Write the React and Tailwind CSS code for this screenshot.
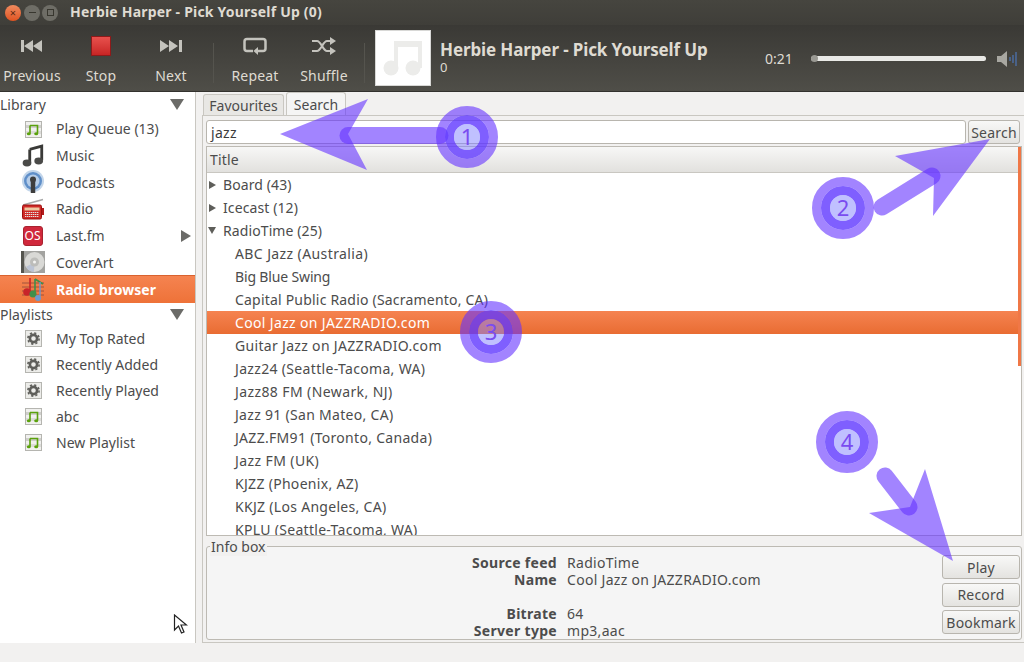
import React from 'react';

const FONT = 'font-["Noto_Sans","Open_Sans",sans-serif]';

const PlaylistIcon = () => (
  <svg width="20" height="20" viewBox="0 0 20 20">
    <rect x="2.5" y="2.5" width="16" height="16" fill="#f0f0ee" stroke="#b5b5b0" />
    <rect x="3" y="6" width="15" height="3" fill="#cfcfcb" />
    <rect x="3" y="12" width="15" height="3" fill="#dcdcd8" />
    <path d="M7 6.500h7.500v8M7 6.500v8" fill="none" stroke="#5aa10c" strokeWidth="1.600" />
    <ellipse cx="5.800" cy="14.800" rx="2" ry="1.500" fill="#5aa10c" />
    <ellipse cx="13.200" cy="14.800" rx="2" ry="1.500" fill="#5aa10c" />
  </svg>
);

const GearIcon = () => (
  <svg width="20" height="20" viewBox="0 0 20 20">
    <rect x="2.5" y="2.5" width="16" height="16" fill="#ecece9" stroke="#b5b5b0" />
    <circle cx="10.500" cy="10.500" r="3.600" fill="none" stroke="#5e5e5a" strokeWidth="2.600" />
    <circle cx="10.500" cy="10.500" r="5.600" fill="none" stroke="#5e5e5a" strokeWidth="1.600" strokeDasharray="2.200 2.200" />
  </svg>
);

const MusicIcon = () => (
  <svg width="24" height="24" viewBox="0 0 22 22">
    <path d="M8 5l11-3v13M8 5v12" fill="none" stroke="#3a3a38" strokeWidth="2.600" />
    <ellipse cx="5.500" cy="17.500" rx="4" ry="3.200" fill="#4a4a48" />
    <ellipse cx="16.200" cy="15.500" rx="4" ry="3.200" fill="#4a4a48" />
  </svg>
);

const PodcastIcon = () => (
  <svg width="24" height="24" viewBox="0 0 24 24">
    <circle cx="12" cy="11" r="11" fill="#c2d5ea" />
    <circle cx="12" cy="11" r="9" fill="#5f8fc9" />
    <circle cx="12" cy="11" r="6.500" fill="#b6cde8" />
    <circle cx="12" cy="9.500" r="3" fill="#3d3d3d" />
    <path d="M12 11v12" stroke="#3d3d3d" strokeWidth="4.500" />
  </svg>
);

const RadioIcon = () => (
  <svg width="24" height="22" viewBox="0 0 24 22">
    <path d="M2 7L22 1.500" stroke="#a8a8a8" strokeWidth="1.600" />
    <rect x="1.500" y="7" width="19" height="14" rx="1.500" fill="#cf2a27" stroke="#9c0f0f" />
    <rect x="21" y="10" width="2" height="7" fill="#b41c1c" />
    <rect x="3.500" y="9.500" width="15" height="3" fill="#eec9a2" />
    <path d="M4 14.500h14M4 16.500h14M4 18.500h14" stroke="#e2e2e2" strokeWidth="1.200" strokeDasharray="1.400 0.600" />
  </svg>
);

const LastfmIcon = () => (
  <div className="flex h-[20px] w-[20px] items-center justify-center rounded-[3px] border border-[#a8232f] bg-[#d0283c] text-[12px] leading-none text-white">
    OS
  </div>
);

const CoverArtIcon = () => (
  <svg width="24" height="22" viewBox="0 0 24 22">
    <rect x="0" y="0" width="24" height="22" fill="#a3a3a0" />
    <rect x="0" y="0" width="3" height="22" fill="#55554f" />
    <circle cx="13.500" cy="11" r="10" fill="#d9d9d6" />
    <path d="M13.500 11L5 16a10 10 0 0 0 8 5z" fill="#bcc4d4" />
    <circle cx="13.500" cy="11" r="4.500" fill="#bdbdba" />
    <circle cx="13.500" cy="11" r="1.500" fill="#f4f4f2" />
  </svg>
);

const RadioBrowserIcon = () => (
  <svg width="24" height="24" viewBox="0 0 24 24">
    <path d="M1 6h22M1 10h22M1 14h22M1 18h22" stroke="#8a4a3a" strokeWidth="0.800" />
    <path d="M9 1v14" stroke="#c8232a" strokeWidth="1.600" />
    <circle cx="6" cy="15" r="3.800" fill="#c8232a" />
    <path d="M14 2l8 5M14 2v16" stroke="#3f8f4a" strokeWidth="1.600" fill="none" />
    <path d="M19 5v14" stroke="#6b9ad0" strokeWidth="1.400" />
    <circle cx="12" cy="17" r="3.500" fill="#3f8f4a" />
    <circle cx="17" cy="21" r="3" fill="#6b9ad0" />
  </svg>
);

const library = [
  { label: 'Play Queue (13)', icon: <PlaylistIcon />, h: 'h-[27px]' },
  { label: 'Music', icon: <MusicIcon />, h: 'h-[27px]' },
  { label: 'Podcasts', icon: <PodcastIcon />, h: 'h-[26px]' },
  { label: 'Radio', icon: <RadioIcon />, h: 'h-[27px]' },
  { label: 'Last.fm', icon: <LastfmIcon />, h: 'h-[27px]' , more: true },
  { label: 'CoverArt', icon: <CoverArtIcon />, h: 'h-[26px]' },
  { label: 'Radio browser', icon: <RadioBrowserIcon />, h: 'h-[28px] pb-px', active: true },
];

const playlists = [
  { label: 'My Top Rated', icon: <GearIcon /> },
  { label: 'Recently Added', icon: <GearIcon /> },
  { label: 'Recently Played', icon: <GearIcon /> },
  { label: 'abc', icon: <PlaylistIcon /> },
  { label: 'New Playlist', icon: <PlaylistIcon /> },
];

const stations = [
  { name: 'ABC Jazz (Australia)', track: 'tracking-[0.4px]' },
  { name: 'Big Blue Swing', track: 'tracking-[-0.15px]' },
  { name: 'Capital Public Radio (Sacramento, CA)', track: 'tracking-[0.2px]' },
  { name: 'Cool Jazz on JAZZRADIO.com', track: 'tracking-[0.35px]' },
  { name: 'Guitar Jazz on JAZZRADIO.com', track: 'tracking-[0.32px]' },
  { name: 'Jazz24 (Seattle-Tacoma, WA)', track: 'tracking-[0.33px]' },
  { name: 'Jazz88 FM (Newark, NJ)', track: 'tracking-[0.4px]' },
  { name: 'Jazz 91 (San Mateo, CA)', track: 'tracking-[0.3px]' },
  { name: 'JAZZ.FM91 (Toronto, Canada)', track: 'tracking-[0.3px]' },
  { name: 'Jazz FM (UK)', track: 'tracking-[0.4px]' },
  { name: 'KJZZ (Phoenix, AZ)', track: 'tracking-[0.3px]' },
  { name: 'KKJZ (Los Angeles, CA)', track: 'tracking-[0.3px]' },
  { name: 'KPLU (Seattle-Tacoma, WA)', track: 'tracking-[0.3px]' },
];

const SectionHeader = ({ title, className }) => (
  <div className={`flex items-center justify-between pr-[11px] ${className}`}>
    <span className="text-[14px] text-[#4c4c4c]">{title}</span>
    <div className="h-0 w-0 border-x-[7px] border-t-[11px] border-x-transparent border-t-[#6b6b68]" />
  </div>
);

const SidebarRow = ({ item, heightClass }) => (
  <div className={`flex items-center ${heightClass} ${item.active ? 'border-t border-[#d9622f] bg-gradient-to-b from-[#f58350] to-[#ee7238] font-bold text-white' : 'text-[#4c4c4c]'}`}>
    <div className="flex w-[56px] shrink-0 justify-center pl-[9px]">{item.icon}</div>
    <span className="flex-1 text-[14px]">{item.label}</span>
    {item.more && <div className="mr-[4px] h-0 w-0 border-y-[6px] border-l-[10px] border-y-transparent border-l-[#6b6b68]" />}
  </div>
);

const ToolButton = ({ label, width, children }) => (
  <div className={`mt-[3px] flex ${width} shrink-0 flex-col items-center`}>
    <div className="flex h-[26px] items-center justify-center">{children}</div>
    <span className="mt-[8px] text-[14px] leading-[18px] tracking-[0.2px] text-[#dfdbd2]">{label}</span>
  </div>
);

const Separator = () => <div className="mx-[1px] mt-[13px] h-[40px] w-px shrink-0 bg-[#55544e]" />;

const TreeArrow = ({ open }) => (
  <div className={open ? 'h-0 w-0 border-x-[4px] border-t-[7px] border-x-transparent border-t-[#5e5e5a]' : 'h-0 w-0 border-y-[4px] border-l-[7px] border-y-transparent border-l-[#5e5e5a]'} />
);

const GroupRow = ({ label, open }) => (
  <div className="flex h-[23px] items-center text-[14px] text-[#4c4c4c]">
    <div className="flex w-[16px] justify-center pr-[6px]"><TreeArrow open={open} /></div>
    <span className="tracking-[0.1px]">{label}</span>
  </div>
);

const GtkButton = ({ label, className }) => (
  <div className={`flex items-center justify-center rounded-[3px] border border-[#b8b5ae] bg-gradient-to-b from-[#f8f8f7] to-[#e4e3e0] text-[14px] tracking-[0.2px] text-[#4c4c4c] ${className}`}>
    {label}
  </div>
);

const InfoRow = ({ name, value }) => (
  <div className="flex h-[17px] items-center text-[14px] tracking-[0.3px] text-[#4c4c4c]">
    <span className="w-[350px] shrink-0 text-right font-bold">{name}</span>
    <span className="ml-[10px]">{value}</span>
  </div>
);

const Badge = ({ cx, cy, n }) => (
  <g>
    <circle cx={cx} cy={cy} r="26.500" fill="none" stroke="#6432ff" strokeOpacity="0.6" strokeWidth="9" />
    <circle cx={cx} cy={cy} r="17.500" fill="none" stroke="#5f37ff" strokeOpacity="0.8" strokeWidth="9" />
    <circle cx={cx} cy={cy} r="13" fill="#8282ff" fillOpacity="0.5" />
    <text x={cx} y={cy + 8} textAnchor="middle" fontSize="22" fill="#7a4cf0" fontFamily="Noto Sans">{n}</text>
  </g>
);

const Arrow = ({ shaft, head }) => (
  <g>
    <path d={shaft} stroke="#6432ff" strokeOpacity="0.6" strokeWidth="17" strokeLinecap="round" fill="none" />
    <polygon points={head} fill="#6432ff" fillOpacity="0.6" />
  </g>
);

export default function App() {
  return (
    <div className={`relative flex h-[662px] w-[1024px] flex-col overflow-hidden bg-[#f2f1f0] ${FONT}`}>
      {/* title bar */}
      <div className="flex h-[25px] shrink-0 items-center bg-gradient-to-b from-[#46453f] to-[#3f3e39] pl-[5px]">
        <div className="flex h-[16px] w-[16px] items-center justify-center rounded-full bg-gradient-to-b from-[#f08a5d] to-[#e0531f] text-[11px] leading-none text-[#5a2a14]">×</div>
        <div className="ml-[3px] flex h-[16px] w-[16px] items-center justify-center rounded-full bg-[#6e6d66]"><div className="h-px w-[7px] bg-[#38372f]" /></div>
        <div className="ml-[2px] flex h-[16px] w-[16px] items-center justify-center rounded-full bg-[#6e6d66]"><div className="h-[7px] w-[7px] border border-[#38372f]" /></div>
        <span className="-mt-[3px] ml-[12px] text-[14px] font-bold tracking-[0.2px] text-[#dfdbd2]">Herbie Harper - Pick Yourself Up (0)</span>
      </div>

      {/* toolbar */}
      <div className="flex h-[67px] shrink-0 items-start border-b border-[#33322e] bg-gradient-to-b from-[#3a3935] to-[#4f4e48] pt-[5px]">
        <ToolButton label="Previous" width="w-[64px]">
          <svg width="22" height="14" viewBox="0 0 22 14" fill="#c4c3bd"><rect x="0" y="1" width="3" height="12" /><path d="M3 7l9-6v12zM12 7l9-6v12z" /></svg>
        </ToolButton>
        <ToolButton label="Stop" width="w-[74px]">
          <div className="h-[20px] w-[20px] border border-[#8e1a1a] bg-gradient-to-b from-[#e8504d] to-[#c82424]" />
        </ToolButton>
        <ToolButton label="Next" width="w-[66px]">
          <svg width="22" height="14" viewBox="0 0 22 14" fill="#c4c3bd"><path d="M0 1l9 6-9 6zM9 1l9 6-9 6z" /><rect x="19" y="1" width="3" height="12" /></svg>
        </ToolButton>
        <div className="ml-[8px]"><Separator /></div>
        <ToolButton label="Repeat" width="w-[80px]">
          <svg width="24" height="18" viewBox="0 0 24 18" fill="none" stroke="#c4c3bd" strokeWidth="2.500"><path d="M10 14H4a2.500 2.500 0 0 1-2.500-2.500V4.500A2.500 2.500 0 0 1 4 2h16a2.500 2.500 0 0 1 2.500 2.500v7A2.500 2.500 0 0 1 20 14h-6" /><path d="M15 10l-4.500 4 4.500 4z" fill="#c4c3bd" stroke="none" /></svg>
        </ToolButton>
        <ToolButton label="Shuffle" width="w-[58px]">
          <svg width="24" height="18" viewBox="0 0 24 18" fill="none" stroke="#c4c3bd" strokeWidth="2.200"><path d="M0 4h5c4 0 6 10 10 10h4M0 14h5c4 0 6-10 10-10h4" /><path d="M18 0l6 4-6 4zM18 10l6 4-6 4z" fill="#c4c3bd" stroke="none" /></svg>
        </ToolButton>
        <div className="ml-[10px]"><Separator /></div>
        <div className="ml-[9px] h-[56px] w-[56px] shrink-0 border border-[#d8d8d6] bg-white">
          <svg width="54" height="54" viewBox="0 0 54 54" fill="#ececea">
            <path d="M18 10h28v27h-4V16H22v21h-4z" />
            <circle cx="15" cy="37" r="7.500" />
            <circle cx="37" cy="37" r="7.500" />
          </svg>
        </div>
        <div className="ml-[9px] w-[325px] shrink-0 pt-[10px] text-[#dfdbd2]">
          <div className="text-[17px] font-bold leading-[20px] tracking-[-0.12px]">Herbie Harper - Pick Yourself Up</div>
          <div className="text-[13px] leading-[14px]">0</div>
        </div>
        <div className="mt-[19px] w-[46px] shrink-0 text-[14px] leading-[20px] text-[#dfdbd2]">0:21</div>
        <div className="mt-[26px] flex h-[5px] w-[175px] shrink-0 items-center rounded-full bg-[#e9e9e6]">
          <div className="h-[7px] w-[7px] rounded-full bg-[#9a9993]" />
        </div>
        <svg className="ml-[10px] mt-[20px] shrink-0" width="22" height="18" viewBox="0 0 22 18">
          <path d="M1 6h4l6-5v16l-6-5H1z" fill="#a8a7a1" />
          <path d="M14 7v4M17 5v8M20 2v14" stroke="#4d76b8" strokeWidth="1.200" />
        </svg>
      </div>

      {/* main */}
      <div className="flex min-h-0 flex-1">
        <div className="w-[196px] shrink-0 border-r border-[#c9c7c1] bg-white">
          <SectionHeader title="Library" className="h-[23px] pt-[2px]" />
          {library.map((item) => <SidebarRow key={item.label} item={item} heightClass={item.h} />)}
          <SectionHeader title="Playlists" className="h-[22px] pt-px" />
          {playlists.map((item) => <SidebarRow key={item.label} item={item} heightClass="h-[26px]" />)}
          <svg className="ml-[172px] mt-[159px]" width="16" height="22" viewBox="0 0 16 22">
            <path d="M2.500 1v15l4-4 3 7 2.500-1-3-7h5.500z" fill="#fff" stroke="#222" strokeWidth="1.200" />
          </svg>
        </div>

        <div className="flex min-w-0 flex-1 flex-col pl-[6px]">
          {/* tabs */}
          <div className="flex h-[24px] items-end pl-px">
            <div className="flex h-[21px] w-[81px] items-center justify-center rounded-t-[3px] border border-b-0 border-[#c9c7c1] bg-[#e8e7e4] text-[14px] text-[#4c4c4c]">Favourites</div>
            <div className="ml-[2px] flex h-[23px] w-[60px] items-center justify-center rounded-t-[3px] border border-b-0 border-[#c9c7c1] bg-[#f5f5f4] text-[14px] text-[#4c4c4c]">Search</div>
          </div>
          <div className="flex-1 border-b border-l border-t border-[#c9c7c1] pb-[2px] pl-[3px] pr-[2px] pt-[4px]">
            <div className="flex h-[24px] gap-[2px] pr-[2px]">
              <div className="flex flex-1 items-center rounded-[3px] border border-[#b8b5ae] bg-white pl-[4px] text-[14px] tracking-[0.3px] text-[#3c3c3c]">jazz</div>
              <GtkButton label="Search" className="w-[52px]" />
            </div>
            <div className="relative mt-[2px] h-[390px] overflow-hidden border border-[#bdbab3] bg-white">
              <div className="flex h-[26px] items-center border-b border-[#c9c7c1] bg-gradient-to-b from-[#f7f7f6] to-[#e2e1de] pl-[3px] text-[14px] tracking-[0.2px] text-[#4c4c4c]">Title</div>
              <GroupRow label="Board (43)" />
              <GroupRow label="Icecast (12)" />
              <GroupRow label="RadioTime (25)" open />
              {stations.map((s, i) => (
                <div
                  key={s.name}
                  className={`flex h-[23px] items-center pl-[28px] text-[14px] ${s.track} ${i === 3 ? 'bg-gradient-to-b from-[#f58350] to-[#e96c32] text-white' : 'text-[#4c4c4c]'}`}
                >
                  <span className="whitespace-nowrap leading-[18px]">{s.name}</span>
                </div>
              ))}
              <div className="absolute right-0 top-0 h-[219px] w-[3px] bg-[#f07746]" />
            </div>

            {/* info box */}
            <div className="relative mt-[10px] h-[94px] rounded-[3px] border border-[#bdbab3] bg-[#f5f5f5]">
              <span className="absolute -top-[9px] left-[3px] bg-[#f2f1f0] px-px text-[14px] leading-[18px] text-[#4c4c4c]">Info box</span>
              <div className="flex justify-between pt-[8px]">
                <div className="-mt-px">
                  <InfoRow name="Source feed" value="RadioTime" />
                  <InfoRow name="Name" value="Cool Jazz on JAZZRADIO.com" />
                  <InfoRow name={'\u00a0'} value="" />
                  <InfoRow name="Bitrate" value="64" />
                  <InfoRow name="Server type" value="mp3,aac" />
                </div>
                <div className="mr-px flex w-[78px] flex-col gap-[3.5px]">
                  <GtkButton label="Play" className="h-[24px]" />
                  <GtkButton label="Record" className="h-[24px]" />
                  <GtkButton label="Bookmark" className="h-[24px]" />
                </div>
              </div>
            </div>
          </div>
        </div>
      </div>
      <div className="h-[19px] shrink-0 bg-[#f2f1f0]" />

      {/* tutorial annotations drawn over the window */}
      <svg className="pointer-events-none absolute left-0 top-0" width="1024" height="662" viewBox="0 0 1024 662">
        <Arrow shaft="M348 135.500L440 135.500" head="280,134 368,99 348,134 367,170" />
        <Badge cx={467} cy={137} n="1" />
        <Arrow shaft="M882 207L932 176" head="990,139 895,156 934,178 933,216" />
        <Badge cx={843} cy={208} n="2" />
        <Badge cx={491} cy={332} n="3" />
        <Arrow shaft="M885 476L909 507" head="953,561 925,469 910,507 869,513" />
        <Badge cx={847} cy={442} n="4" />
      </svg>
    </div>
  );
}
